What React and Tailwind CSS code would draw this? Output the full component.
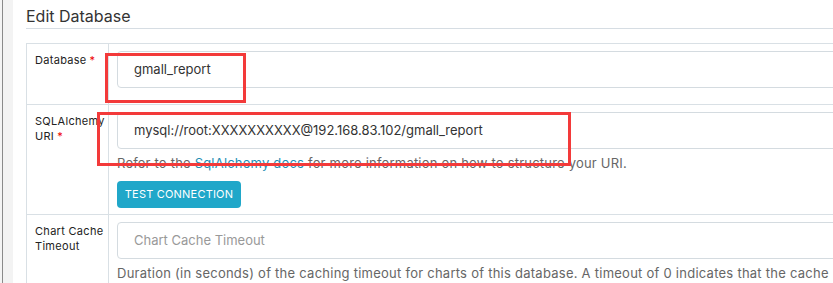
import React from 'react';

const Req = () => <span className="text-[#e00] ml-[3px]">*</span>;

const Row = ({ label, children, last }) => (
  <div className={`flex ${last ? '' : 'border-b border-[#d9e0e5]'}`}>
    <div className="w-[82px] shrink-0 border-r border-[#d9e0e5] pl-2 pr-1 pt-[9px] text-[11px] leading-[15px] tracking-[0.3px] text-[#222] whitespace-nowrap">
      {label}
    </div>
    <div className="flex-1 px-2 pt-[7px]">{children}</div>
  </div>
);

const Input = ({ value, placeholder }) => (
  <div className="h-[37px] rounded-[4px] border border-[#d4dbe0] flex items-center pl-4 text-[13px]">
    {value ? (
      <span className="text-[#333]">{value}</span>
    ) : (
      <span className="text-[#999]">{placeholder}</span>
    )}
  </div>
);

export default function App() {
  return (
    <div
      className="relative w-[833px] h-[283px] overflow-hidden bg-white flex"
      style={{ fontFamily: 'Inter, "Noto Sans", sans-serif' }}
    >
      {/* left page edge */}
      <div className="w-[3px] shrink-0 border-r border-[#8a8a8a] bg-[#f4f4f4]" />
      <div className="w-[10px] shrink-0 bg-[#f3f3f3]" />

      <div className="flex-1 pl-[13px] pt-[5px]">
        <div className="text-[16px] leading-[22px] text-[#333] pb-[1px] border-b border-[#d6dde3] w-[900px]">
          Edit Database
        </div>

        <div className="mt-[14px] w-[900px] border-l border-t border-[#d9e0e5]">
          <Row label={<>Database<Req /></>}>
            <div className="pb-[16px]">
              <Input value="gmall_report" />
            </div>
          </Row>

          <Row label={<>SQLAlchemy<br />URI<Req /></>}>
            <Input value="mysql://root:XXXXXXXXXX@192.168.83.102/gmall_report" />
            <div className="mt-[4px] text-[13px] leading-[20px] tracking-[0.2px] text-[#666]">
              Refer to the <span className="text-[#1f8fb5]">SqlAlchemy docs</span> for more information on how to
              structure your URI.
            </div>
            <button className="mt-[8px] mb-[6px] h-[27px] w-[124px] rounded-[4px] bg-[#20a7c9] text-white text-[11px] tracking-[0.2px]">
              TEST CONNECTION
            </button>
          </Row>

          <Row label={<>Chart Cache<br />Timeout</>} last>
            <Input placeholder="Chart Cache Timeout" />
            <div className="mt-[4px] text-[13px] leading-[20px] tracking-[0.25px] text-[#666] whitespace-nowrap">
              Duration (in seconds) of the caching timeout for charts of this database. A timeout of 0 indicates that the
              cache
            </div>
          </Row>
        </div>
      </div>

      {/* annotation boxes */}
      <div className="absolute left-[105px] top-[53px] w-[141px] h-[50px] border-[3px] border-[#f33a3a]" />
      <div className="absolute left-[97px] top-[112px] w-[474px] h-[54px] border-[3px] border-[#f33a3a]" />
    </div>
  );
}
